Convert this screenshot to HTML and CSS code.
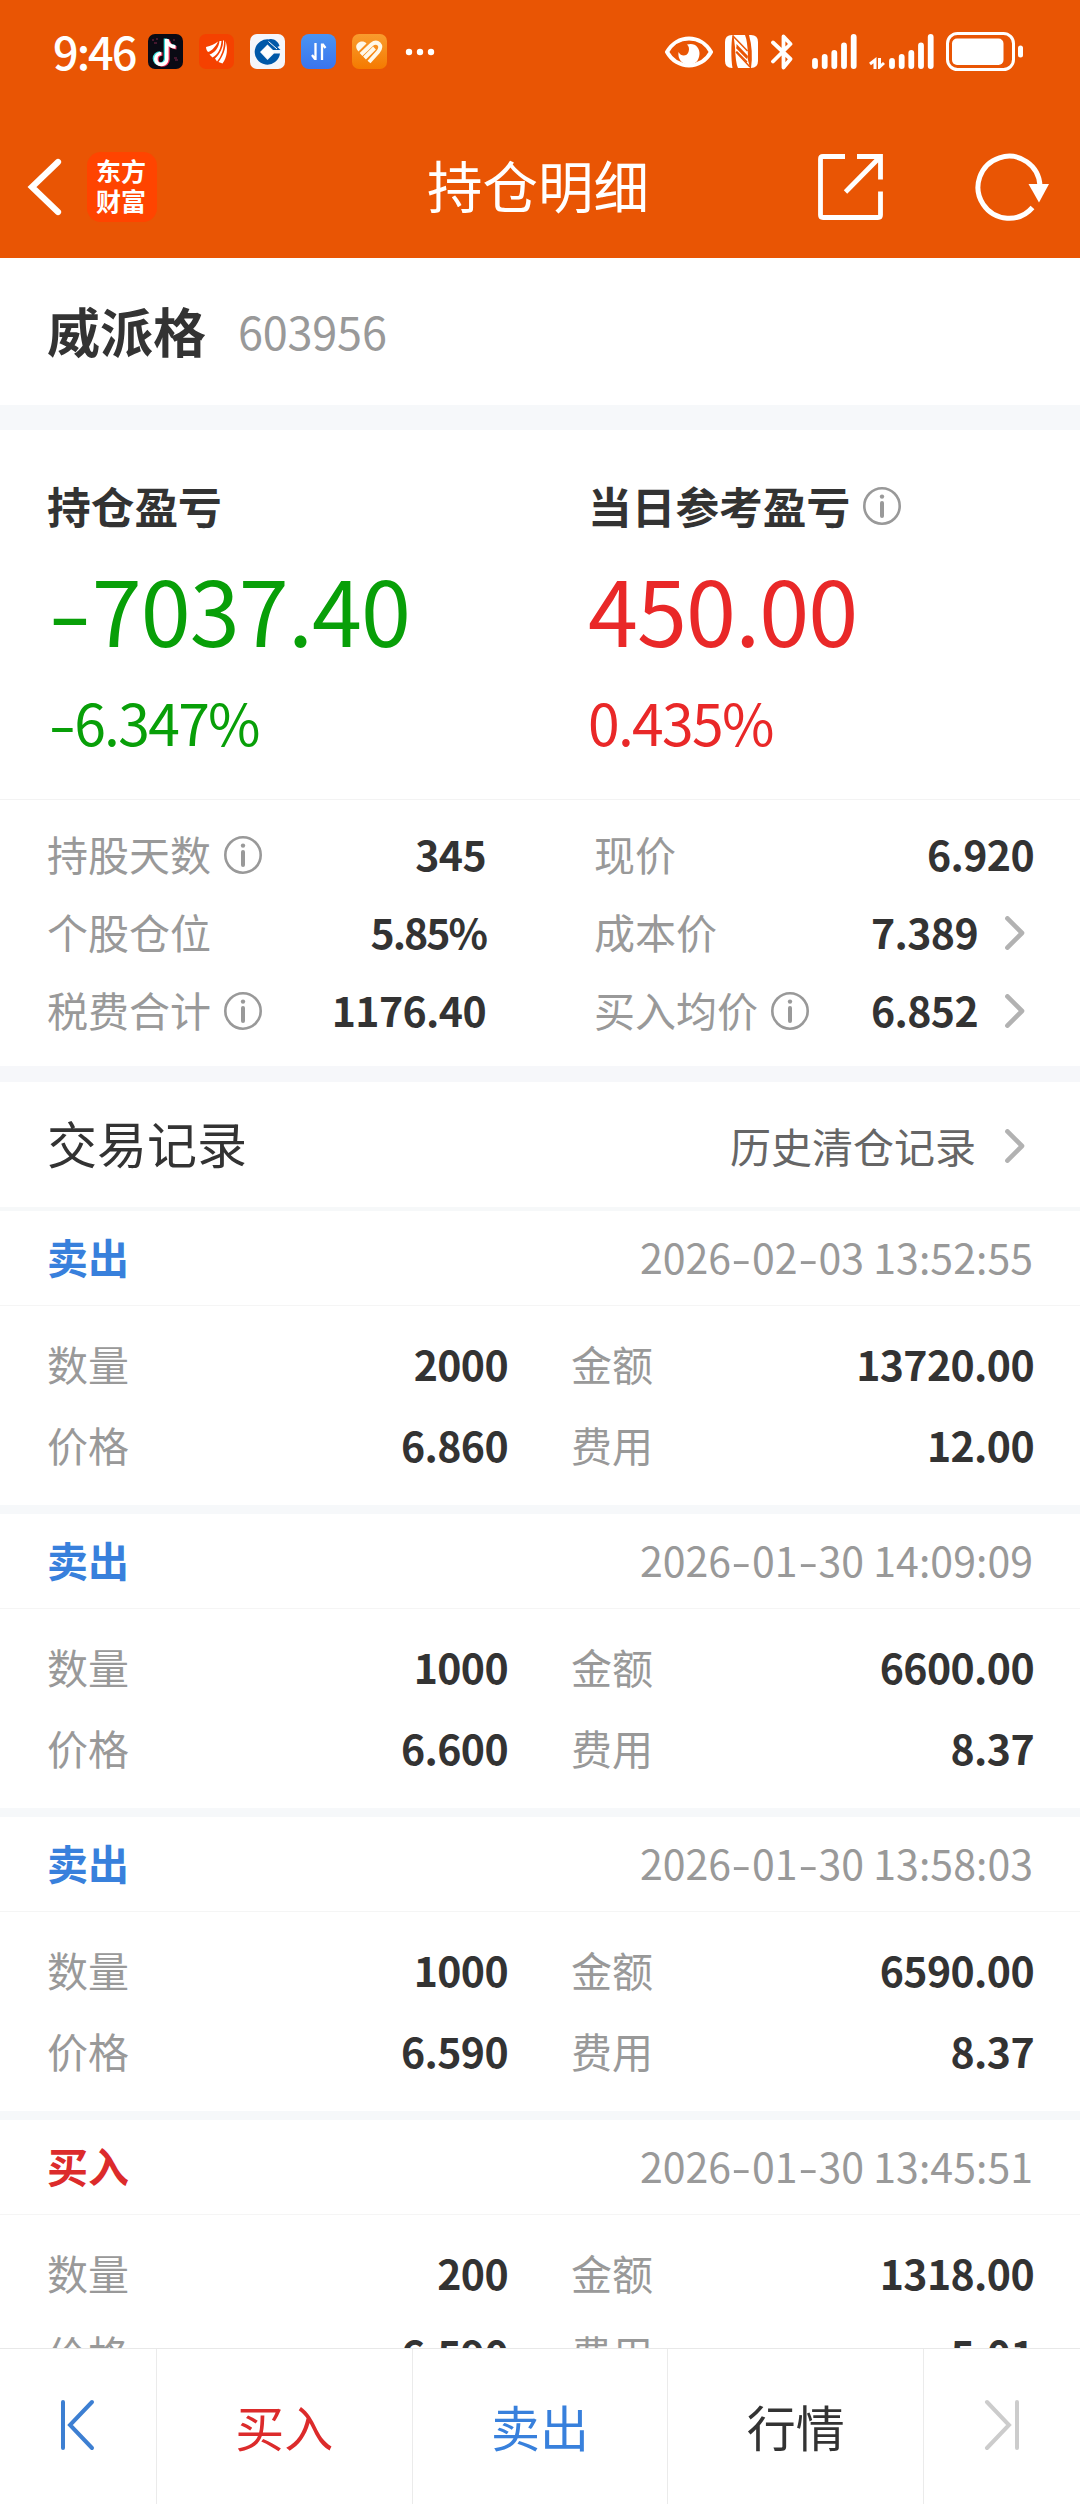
FILE: index.html
```
<!DOCTYPE html>
<html lang="zh-CN">
<head>
	<meta charset="UTF-8">
	<title>持仓明细</title>
	<link rel="stylesheet" href="styles.css">
</head>
<body>
<!-- 公用图标 -->
<svg class="defs" width="0" height="0">
	<symbol id="info" viewBox="0 0 38 38">
		<circle cx="19" cy="19" r="17.7" fill="none" stroke="#999" stroke-width="2.6"/>
		<circle cx="19" cy="9.6" r="2.2" fill="#999"/>
		<path d="M19 16v13" stroke="#999" stroke-width="4" stroke-linecap="round"/>
	</symbol>
	<symbol id="arrow" viewBox="0 0 20 34">
		<path d="M2.4 2.4L17 17L2.4 31.6" fill="none" stroke="#b2b2b2" stroke-width="4.6" stroke-linecap="round" stroke-linejoin="round"/>
	</symbol>
</svg>
<div class="wrap">
	<div class="top">
		<div class="status">
			<span class="time">9:46</span>
			<div class="apps">
				<svg width="35" height="35" viewBox="0 0 35 35">
					<rect width="35" height="35" rx="7" fill="#0a0a14"/>
					<path d="M4 6h2m2-1h2m-4 4h3M25 6h2m-1 18h3m-2 2h3" stroke="#5a1c38" stroke-width="1.4"/>
					<path d="M17.500 4.500v20a5.500 5.500 0 1 1-5.500-5.500M18 5.500c.8 4 4 6.500 8.500 6.700" fill="none" stroke="#3be0e0" stroke-width="3.600"/>
					<path d="M20 5.500v20a5.500 5.500 0 1 1-5.500-5.500M20.500 7c.8 4 3.500 6.500 8 6.700" fill="none" stroke="#f0325a" stroke-width="3.600"/>
					<path d="M18.800 5v20a5.500 5.500 0 1 1-5.500-5.500M19 6c.8 4 4 6.800 8.500 7" fill="none" stroke="#fff" stroke-width="3.600"/>
				</svg>
				<svg width="35" height="35" viewBox="0 0 35 35">
					<rect width="35" height="35" rx="7" fill="#f54100"/>
					<path d="M7 13C12 12 16 10 19 7.500C17 12 13 17 9 18C8 17 7 15 7 13Z" fill="#fff"/>
					<path d="M20.500 7C20 13 16 19 10.500 20.500L13.500 23.500C19 21 22 14 22.500 7Z" fill="#fff"/>
					<path d="M24 6.500C24.500 13 21 20 16 24.500L18 27.500C22 23 25.500 14 25 6.500Z" fill="#fff"/>
					<path d="M26.500 7C29 14 28.500 23 23.500 29.500L19.500 28C24 22 27 15 26.500 7Z" fill="#fff"/>
				</svg>
				<svg width="35" height="35" viewBox="0 0 35 35">
					<rect width="35" height="35" rx="7" fill="#f5f6fa"/>
					<path d="M20 5.500A12.700 12.700 0 1 0 30 19.500H24L17.500 26L10 18L17.500 10.500L23 16H30.500Z" fill="#0058a8"/>
					<path d="M17.500 11.500L24 18L17.500 24.500L11 18Z" fill="#fff"/>
					<path d="M19 5.500C23 4 28 7 29.500 12L26 13.500Z" fill="#0058a8"/>
					<path d="M18.500 7.500L27 15" stroke="#fff" stroke-width="1"/>
				</svg>
				<svg width="35" height="35" viewBox="0 0 35 35">
					<defs><linearGradient id="g1" x2="0" y2="1"><stop stop-color="#4a94f2"/><stop offset="1" stop-color="#3a74ee"/></linearGradient></defs>
					<rect width="35" height="35" rx="8" fill="url(#g1)"/>
					<path d="M14.500 9v17M14 25l-3-4M21 26V9.500M21.500 10l3 4" fill="none" stroke="#fff" stroke-width="2.300"/>
				</svg>
				<svg width="35" height="35" viewBox="0 0 35 35">
					<defs><linearGradient id="g2" x2="0" y2="1"><stop stop-color="#f99c2e"/><stop offset="1" stop-color="#f57a00"/></linearGradient></defs>
					<rect width="35" height="35" rx="7" fill="url(#g2)"/>
					<path d="M6.500 17.500L14.500 9.500C11 5.500 5 8 4.200 12C4 14 5 16 6.500 17.500Z" fill="#fff8e8"/>
					<path d="M9 20.500L19.500 10.500Q24 7 27 10T26 18L17 28M12.500 24L22.500 14" fill="none" stroke="#fff8e8" stroke-width="4"/>
				</svg>
			</div>
			<svg class="more" width="30" height="8" viewBox="0 0 30 8">
				<circle cx="4" cy="4" r="3.200" fill="#fff"/>
				<circle cx="15" cy="4" r="3.200" fill="#fff"/>
				<circle cx="26" cy="4" r="3.200" fill="#fff"/>
			</svg>
			<div class="signs">
				<!-- 护眼 -->
				<svg width="48" height="32" viewBox="0 0 48 32">
					<path d="M2 16C12-2 36-2 46 16C36 34 12 34 2 16Z" fill="none" stroke="#fff" stroke-width="4"/>
					<path d="M22 8.500C30 6 35 12 34.500 18C34 25 30 28.500 24 28.500C17 28.500 12.500 23 13.500 16C16 21 22 20.500 23.500 16C24.500 13 24 10 22 8.500Z" fill="#fff"/>
				</svg>
				<!-- NFC -->
				<svg class="nfc" width="33" height="33" viewBox="0 0 33 33">
					<path d="M7 0H7.500C6 9 6 24 7.500 33H7Q0 33 0 26V7Q0 0 7 0Z" fill="#fff"/>
					<path d="M26 0Q33 0 33 7V26Q33 33 26 33Q28.500 16 24 0Z" fill="#fff"/>
					<path d="M8.500 0H20Q22.500 6 23 21L11.500 9V13L22 24V21L25 33H13Q10.500 28 10 12Z" fill="#fff"/>
					<path d="M11.500 12.500L22 23M11.500 16.500L22 27" stroke="#e95504" stroke-width="1.500"/>
					<path d="M8 1L22.500 16M11 17L25 32" stroke="#e95504" stroke-width="1.500"/>
				</svg>
				<!-- 蓝牙 -->
				<svg class="bt" width="22" height="36" viewBox="0 0 22 36">
					<path d="M2 8.500L19.500 25L12.500 33.500V2.500L19.500 10L2 27.500" fill="none" stroke="#fff" stroke-width="3.800" stroke-linecap="round" stroke-linejoin="round"/>
				</svg>
				<svg class="bars" width="45" height="35" viewBox="0 0 45 35">
					<path d="M3 27v5M12.700 23v9M22.300 19v13M32 11.500v20.500M41.700 3v29" stroke="#fff" stroke-width="5.800" stroke-linecap="round"/>
				</svg>
				<svg class="bars2" width="65" height="35" viewBox="0 0 65 35">
					<path d="M6 35V26L1 30M10.500 24V33L15 29" fill="none" stroke="#fff" stroke-width="3"/>
					<path d="M23 27v5M32.700 23v9M42.300 19v13M52 11.500v20.500M61.700 3v29" stroke="#fff" stroke-width="5.800" stroke-linecap="round"/>
				</svg>
				<svg class="battery" width="77" height="39" viewBox="0 0 77 39">
					<rect x="1.500" y="1.500" width="66" height="36" rx="10" fill="none" stroke="#fff" stroke-width="3"/>
					<rect x="6" y="6.500" width="51.500" height="26.500" rx="5" fill="#fff"/>
					<rect x="72" y="13.500" width="5" height="12" rx="2.500" fill="#fff"/>
				</svg>
			</div>
		</div>
		<div class="nav">
			<div class="nav-left">
				<svg width="36" height="58" viewBox="0 0 36 58">
					<path d="M32 4L6 29L32 54" fill="none" stroke="#fff" stroke-width="6.200" stroke-linecap="round" stroke-linejoin="miter"/>
				</svg>
				<div class="logo">东方<br>财富</div>
			</div>
			<h1>持仓明细</h1>
			<div class="nav-right">
				<svg width="66" height="66" viewBox="0 0 66 66">
					<path d="M27 2.500H5Q2.500 2.500 2.500 5V61Q2.500 63.500 5 63.500H60Q62.500 63.500 62.500 61V37.500M39 2.500H62.500V25.500M62 3L27.500 38" fill="none" stroke="#fff" stroke-width="4.800"/>
				</svg>
				<svg width="76" height="68" viewBox="0 0 76 68">
					<path d="M58.500 54.500A31 31 0 1 1 66 33" fill="none" stroke="#fff" stroke-width="5"/>
					<path d="M54.500 31H75L65 49.500Z" fill="#fff"/>
				</svg>
			</div>
		</div>
	</div>

	<div class="stock">
		<b>威派格</b>
		<span>603956</span>
	</div>

	<div class="profit">
		<div class="green">
			<h2>持仓盈亏</h2>
			<strong><i>-</i>7037.40</strong>
			<em><i>-</i>6.347%</em>
		</div>
		<div class="red">
			<h2>当日参考盈亏<svg class="info"><use href="#info"/></svg></h2>
			<strong>450.00</strong>
			<em>0.435%</em>
		</div>
	</div>

	<div class="detail">
		<ul>
			<li><span>持股天数</span><svg class="info"><use href="#info"/></svg><b>345</b></li>
			<li><span>个股仓位</span><b class="percent">5.85%</b></li>
			<li><span>税费合计</span><svg class="info"><use href="#info"/></svg><b>1176.40</b></li>
		</ul>
		<ul>
			<li><span>现价</span><b>6.920</b></li>
			<li><span>成本价</span><b>7.389</b><svg class="arrow"><use href="#arrow"/></svg></li>
			<li><span>买入均价</span><svg class="info"><use href="#info"/></svg><b>6.852</b><svg class="arrow"><use href="#arrow"/></svg></li>
		</ul>
	</div>

	<div class="title">
		<h3>交易记录</h3>
		<span>历史清仓记录</span>
		<svg class="arrow"><use href="#arrow"/></svg>
	</div>

	<div class="list">
		<div class="item">
			<div class="item-top"><b class="sell">卖出</b><span>2026<i>-</i>02<i>-</i>03 13:52:55</span></div>
			<div class="item-main">
				<p><span>数量</span><b>2000</b></p>
				<p><span>金额</span><b>13720.00</b></p>
				<p><span>价格</span><b>6.860</b></p>
				<p><span>费用</span><b>12.00</b></p>
			</div>
		</div>
		<div class="item">
			<div class="item-top"><b class="sell">卖出</b><span>2026<i>-</i>01<i>-</i>30 14:09:09</span></div>
			<div class="item-main">
				<p><span>数量</span><b>1000</b></p>
				<p><span>金额</span><b>6600.00</b></p>
				<p><span>价格</span><b>6.600</b></p>
				<p><span>费用</span><b>8.37</b></p>
			</div>
		</div>
		<div class="item">
			<div class="item-top"><b class="sell">卖出</b><span>2026<i>-</i>01<i>-</i>30 13:58:03</span></div>
			<div class="item-main">
				<p><span>数量</span><b>1000</b></p>
				<p><span>金额</span><b>6590.00</b></p>
				<p><span>价格</span><b>6.590</b></p>
				<p><span>费用</span><b>8.37</b></p>
			</div>
		</div>
		<div class="item">
			<div class="item-top"><b class="buy">买入</b><span>2026<i>-</i>01<i>-</i>30 13:45:51</span></div>
			<div class="item-main">
				<p><span>数量</span><b>200</b></p>
				<p><span>金额</span><b>1318.00</b></p>
				<p><span>价格</span><b>6.590</b></p>
				<p><span>费用</span><b>5.01</b></p>
			</div>
		</div>
	</div>

	<div class="footer">
		<div class="side">
			<svg width="36" height="52" viewBox="0 0 36 52">
				<path d="M4 3v46M33 3L11 26L33 49" fill="none" stroke="#3d7fd2" stroke-width="4" stroke-linecap="round"/>
			</svg>
		</div>
		<div class="buy">买入</div>
		<div class="sell">卖出</div>
		<div>行情</div>
		<div class="side">
			<svg width="36" height="52" viewBox="0 0 36 52">
				<path d="M33 3v46M3 3L25 26L3 49" fill="none" stroke="#ccc" stroke-width="4" stroke-linecap="round"/>
			</svg>
		</div>
	</div>
</div>
</body>
</html>
```
FILE: styles.css
```
*{
	margin: 0;
	padding: 0;
	box-sizing: border-box;
}
body{
	font-family: 'Noto Sans CJK SC', sans-serif;
	font-size: 41px;
	line-height: 1;
	color: #333;
	background: #fff;
}
i,em{
	font-style: normal;
}
svg{
	display: block;
	flex: none;
}
ul{
	list-style: none;
}
.defs{
	position: absolute;
}
.wrap{
	width: 1080px;
	height: 2504px;
	display: flex;
	flex-direction: column;
	overflow: hidden;
}
/* 负号、日期横线加宽 */
i{
	display: inline-block;
	margin: 0 .08em;
	transform: scaleX(1.4);
}
.buy{
	color: #dc2b2b;
}
.sell{
	color: #3880dc;
}
.info{
	width: 38px;
	height: 38px;
	margin-left: 13px;
}
.arrow{
	width: 20px;
	height: 34px;
	margin: 0 9px 0 27px;
}

/* 顶部 */
.top{
	flex: none;
	height: 258px;
	background: #e95504;
	color: #fff;
}
.status{
	display: flex;
	align-items: center;
	height: 103px;
	padding-left: 53px;
}
.time{
	width: 95px;
	padding-bottom: 3px;
	font-size: 45px;
	font-weight: 500;
	letter-spacing: -2px;
}
.apps{
	display: flex;
	gap: 16px;
}
.more{
	margin-left: 18px;
}
.signs{
	display: flex;
	align-items: center;
	margin: 0 57px 0 auto;
}
.nfc{
	margin-left: 12px;
}
.bt{
	margin-left: 13px;
}
.bars{
	margin-left: 19px;
}
.bars2{
	margin-left: 12px;
}
.battery{
	margin-left: 12px;
}
.nav{
	display: flex;
	align-items: center;
	justify-content: space-between;
	height: 168px;
	padding: 0 30px 0 26px;
}
.nav-left,.nav-right{
	display: flex;
	align-items: center;
	width: 232px;
}
.nav-right{
	justify-content: space-between;
}
.logo{
	width: 70px;
	height: 70px;
	margin-left: 25px;
	padding: 3px 2px 0 0;
	border-radius: 14px;
	background: #ff4400;
	font-size: 25px;
	font-weight: bold;
	line-height: 30px;
	text-align: center;
}
.nav h1{
	padding-bottom: 4px;
	font-size: 55.500px;
	font-weight: normal;
}

/* 股票名称 */
.stock{
	flex: none;
	display: flex;
	align-items: center;
	height: 172px;
	padding: 0 0 3px 47px;
	border-bottom: 25px solid #f6f8fa;
}
.stock b{
	font-size: 53px;
}
.stock span{
	margin-left: 32px;
	font-size: 45px;
	letter-spacing: -.2px;
	color: #999;
}

/* 盈亏 */
.profit{
	flex: none;
	display: flex;
	height: 370px;
	padding: 54px 0 0 47px;
	border-bottom: 1px solid #f3f3f3;
}
.profit div{
	flex: none;
	width: 541px;
}
.profit h2{
	display: flex;
	align-items: center;
	height: 44px;
	font-size: 43.700px;
	color: #333;
}
.profit strong{
	display: block;
	margin-top: 35px;
	font-size: 90px;
	font-weight: normal;
	letter-spacing: -.9px;
}
.profit em{
	display: block;
	margin-top: 40px;
	font-size: 57px;
	letter-spacing: -1.700px;
}
.green{
	color: #089f08;
}
.red{
	color: #e92828;
}

/* 持仓数据 */
.detail{
	flex: none;
	display: flex;
	height: 282px;
	padding: 16px 46px 0 47px;
	border-bottom: 16px solid #f6f7fa;
}
.detail ul:first-child{
	width: 439px;
	margin-right: 108px;
}
.detail ul:last-child{
	flex: 1;
}
.detail li{
	display: flex;
	align-items: center;
	height: 78px;
}
.detail span{
	padding-bottom: 4px;
	color: #999;
}
.detail b{
	margin-left: auto;
	padding-bottom: 4px;
	letter-spacing: -.6px;
}
.detail .percent{
	letter-spacing: -2px;
}

/* 交易记录 */
.title{
	flex: none;
	display: flex;
	align-items: center;
	height: 129px;
	padding: 2px 46px 0 47px;
	border-bottom: 4px solid #f6f8f9;
}
.title h3{
	margin-right: auto;
	padding-bottom: 7px;
	font-size: 50px;
	font-weight: normal;
}
.title span{
	margin-right: 2px;
	padding-bottom: 1px;
	color: #666;
}
.list{
	flex: 1;
	overflow: hidden;
}
.item{
	height: 303px;
	border-bottom: 9px solid #f6f8fa;
}
.item-top{
	display: flex;
	align-items: center;
	justify-content: space-between;
	height: 95px;
	padding: 0 47px 3px;
	border-bottom: 1px solid #f5f5f5;
}
.item-top span{
	letter-spacing: .05px;
	color: #999;
}
.item-main{
	display: grid;
	grid-template-columns: 461px 463px;
	grid-auto-rows: 81px;
	column-gap: 63px;
	padding: 17px 0 0 47px;
}
.item-main p{
	display: flex;
	align-items: center;
	justify-content: space-between;
}
.item-main span{
	color: #999;
}
.item-main b{
	letter-spacing: -.6px;
}

/* 底部 */
.footer{
	flex: none;
	display: flex;
	height: 156px;
	border-top: 1px solid #e8e8e8;
	background: #fff;
}
.footer div{
	flex: 1;
	display: flex;
	align-items: center;
	justify-content: center;
	padding-bottom: 3px;
	border-left: 1px solid #ebebeb;
	font-size: 49px;
}
.footer .side{
	flex: none;
	width: 157px;
}
.footer .side:first-child{
	width: 156px;
	padding-right: 2px;
	border-left: 0;
}
```
